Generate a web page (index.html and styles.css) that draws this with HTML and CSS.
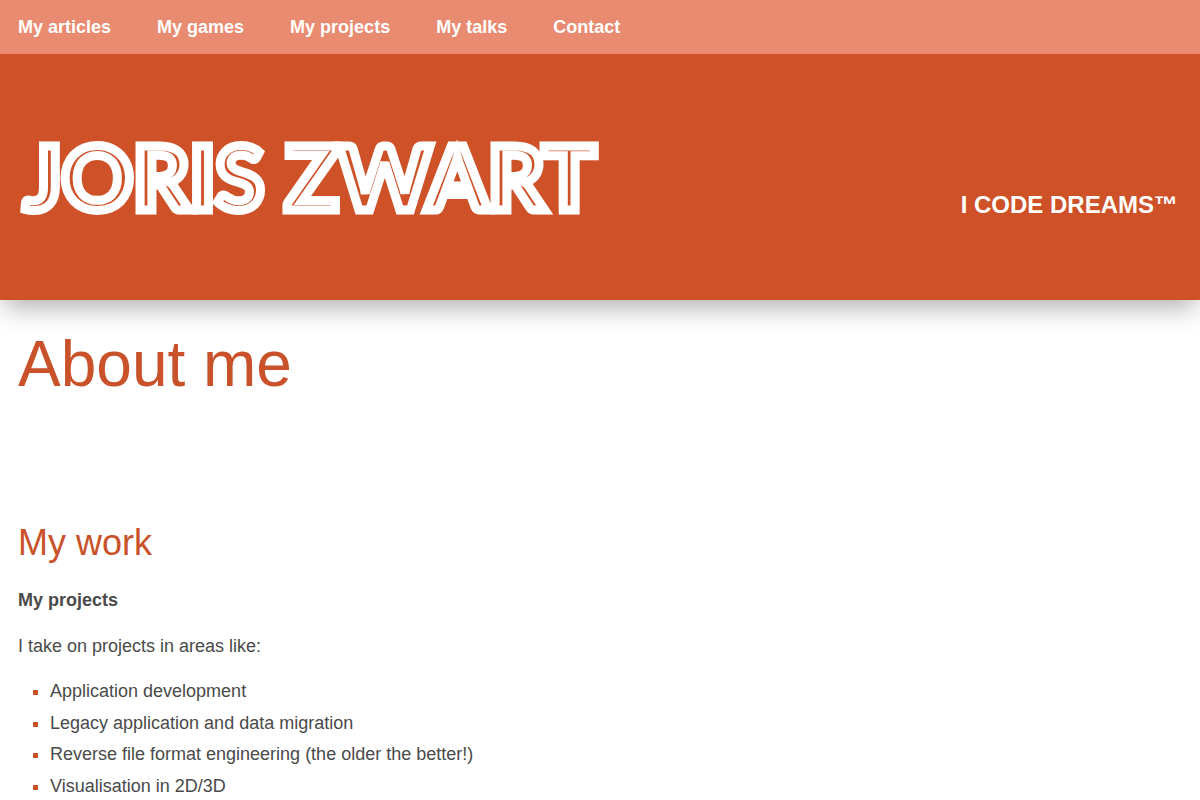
FILE: index.html
```html
<!DOCTYPE html>
<html lang="en">
<head>
<meta charset="utf-8">
<meta name="viewport" content="width=device-width, initial-scale=1">
<title>Joris Zwart - About me</title>
<link rel="stylesheet" href="styles.css">
</head>
<body>
<header class="site-header">
  <nav class="site-nav">
    <a href="#articles">My articles</a>
    <a href="#games">My games</a>
    <a href="#work">My projects</a>
    <a href="#talks">My talks</a>
    <a href="#contact">Contact</a>
  </nav>
  <div class="banner">
    <a class="logo" href="#">JORIS ZWART</a>
    <p class="tagline">I CODE DREAMS™</p>
  </div>
</header>
<main class="content">
  <h1>About me</h1>
  <section id="work">
    <h2>My work</h2>
    <h3>My projects</h3>
    <p>I take on projects in areas like:</p>
    <ul>
      <li>Application development</li>
      <li>Legacy application and data migration</li>
      <li>Reverse file format engineering (the older the better!)</li>
      <li>Visualisation in 2D/3D</li>
    </ul>
  </section>
</main>
</body>
</html>
```

FILE: styles.css
```css
body {
  margin: 0;
  background: #fff;
  color: #4a4a4a;
  font: 18px/1.75 "Liberation Sans", Arial, sans-serif;
}

.site-header {
  background: #ce5127;
  box-shadow: 0 12px 24px -4px rgba(0, 0, 0, 0.3);
}

.site-nav {
  display: flex;
  flex-wrap: wrap;
  gap: 0 46px;
  padding: 11px 18px;
  background: #e98b71;
  line-height: 32px;
}

.site-nav a {
  color: #fff;
  font-weight: bold;
  text-decoration: none;
}

.banner {
  display: flex;
  flex-wrap: wrap;
  align-items: flex-end;
  justify-content: space-between;
  padding: 67px 22px 69px 24px;
}

/* The white outline covers all but the core of each stroke */
.logo {
  color: #ce5127;
  font: 700 88px/110px Lato, sans-serif;
  -webkit-text-stroke: 9px #fff;
  text-decoration: none;
}

.tagline {
  margin: 0;
  color: #fff;
  font-size: 24px;
  font-weight: bold;
  line-height: 52px;
}

.content {
  padding: 28px 18px;
}

h1,
h2 {
  margin: 0;
  color: #c9522b;
  font-weight: normal;
}

h1 {
  margin-bottom: 123px;
  font-size: 64px;
  line-height: 72px;
}

h2 {
  margin-bottom: 22px;
  font-size: 36px;
  line-height: 40px;
}

h3,
p {
  margin: 0 0 14px;
  font-size: 18px;
}

ul {
  margin: 0;
  padding-left: 32px;
  list-style: square;
}

li::marker {
  color: #c9522b;
}
```
